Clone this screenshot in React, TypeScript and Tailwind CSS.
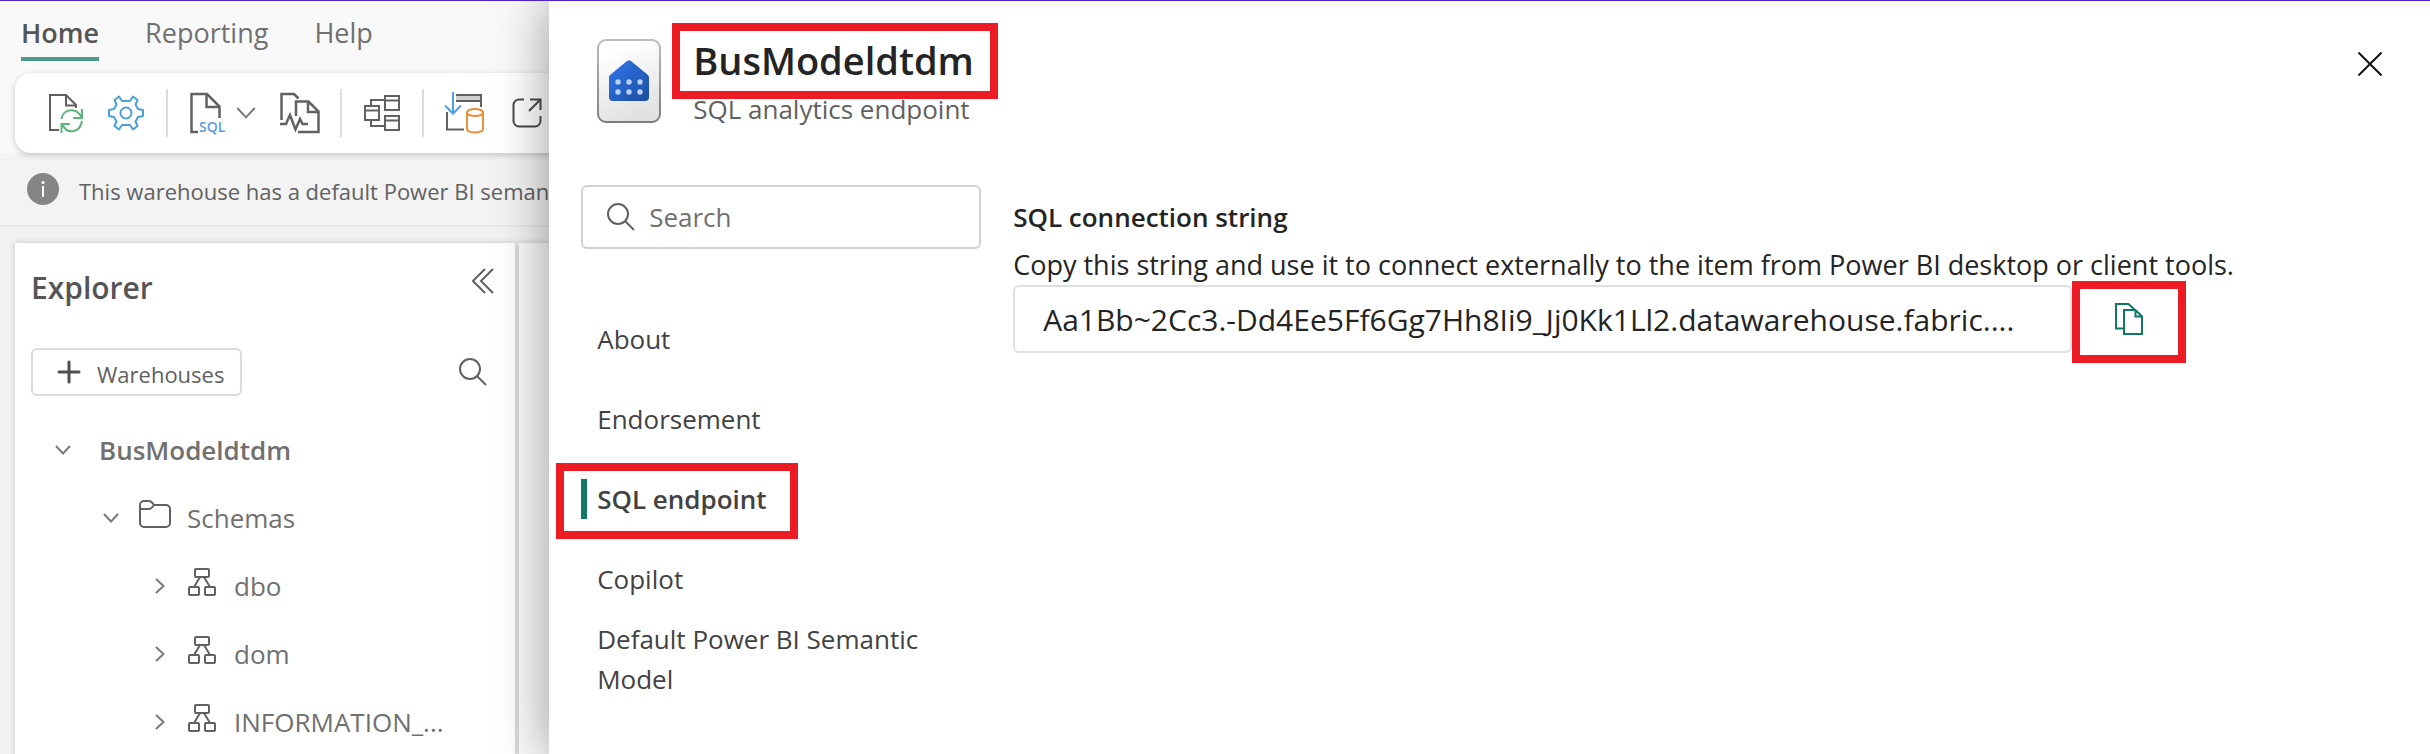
import React from 'react';

const INK = '#616161';

function DocRefresh() {
  return (
    <svg width="36" height="40" viewBox="0 0 36 40" fill="none" strokeWidth="2">
      <path d="M11 37H2V2H18L28 12V15M18 2V12.500H28" stroke="#5f5f5f" />
      <path d="M13.500 26C15 15 29 14 33.500 24.500M34 16V25H25M34 28C32 40 19 42 14.500 31.500M13.500 40V31H22" stroke="#5fb37c" />
    </svg>
  );
}

function Gear() {
  return (
    <svg width="36" height="36" viewBox="-18 -18 36 36" fill="none" stroke="#4ba0dc" strokeWidth="2">
      <path d="M-11.500 -13L-7 -16.500L-4 -12H4L7 -16.500L11.500 -13L9.500 -8.500L12 -4L17 -3V3L12 4L9.500 8.500L11.500 13L7 16.500L4 12H-4L-7 16.500L-11.500 13L-9.500 8.500L-12 4L-17 3V-3L-12 -4L-9.500 -8.500Z" strokeLinejoin="round" />
      <circle r="5.500" />
    </svg>
  );
}

function SqlDoc() {
  return (
    <svg width="38" height="44" viewBox="0 0 38 44" fill="none">
      <path d="M8 41H1.500V3H17L29.500 15.500V27M16.500 3V16H29.500" stroke="#616161" strokeWidth="2.500" />
      <text x="9" y="41" fontSize="14" fontWeight="600" fontFamily="Open Sans, sans-serif" fill="#5b9be6">SQL</text>
    </svg>
  );
}

function DocPulse() {
  return (
    <svg width="40" height="42" viewBox="0 0 40 42" fill="none" stroke="#616161" strokeWidth="2.500">
      <path d="M1.500 28V2H14L18.500 6.500M16 24V9.500H28.500L38.500 19.500V40H18M28 9.500V20H38.500" />
      <path d="M0 32H6L10 23L15.500 37.500L20 27L22.500 32H28" />
    </svg>
  );
}

function Model() {
  return (
    <svg width="36" height="36" viewBox="0 0 36 36" fill="none" stroke="#616161" strokeWidth="2">
      <path d="M1 11H15V25H1ZM1 15.500H15M21 1H35V15H21ZM21 5.500H35M21 21H35V35H21ZM21 25.500H35M7 11V5H21M7 25V31H21" />
    </svg>
  );
}

function TableDownload() {
  return (
    <svg width="40" height="42" viewBox="0 0 40 42" fill="none" strokeWidth="2">
      <path d="M12 3H37V9H12" fill="#d1d1d1" stroke="#616161" />
      <path d="M37 3V15M3 20V37.500H20" stroke="#616161" />
      <path d="M9 0V21M1 13.500L9 21.500L17 13.500" stroke="#4f9ee3" />
      <path d="M23 20.500V37C23 41.500 39 41.500 39 37V20.500" stroke="#e8903c" />
      <ellipse cx="31" cy="20.500" rx="8" ry="3.500" stroke="#e8903c" />
    </svg>
  );
}

function OpenOut() {
  return (
    <svg width="30" height="30" viewBox="0 0 30 30" fill="none" stroke="#4a4a4a" strokeWidth="2">
      <path d="M12 1.500H7A5.500 5.500 0 0 0 1.500 7V23A5.500 5.500 0 0 0 7 28.500H23A5.500 5.500 0 0 0 28.500 23V18M18 1.500H28.500V12M28.500 1.500L17 13" />
    </svg>
  );
}

function Chevron({ dir, size = 16 }: { dir: 'down' | 'right'; size?: number }) {
  return (
    <svg width={size} height={size} viewBox="0 0 16 16" fill="none" stroke="#7a7a7a" strokeWidth={size > 16 ? 1.6 : 2}>
      <path d={dir === 'down' ? 'M1 4L8 11.500L15 4' : 'M4 1L11.500 8L4 15'} />
    </svg>
  );
}

function Magnifier() {
  return (
    <svg width="28" height="28" viewBox="0 0 28 28" fill="none" stroke={INK} strokeWidth="2" className="shrink-0">
      <circle cx="11" cy="11" r="10" />
      <path d="M18 18L27 27" />
    </svg>
  );
}

function Folder() {
  return (
    <svg width="32" height="28" viewBox="0 0 32 28" fill="none" stroke={INK} strokeWidth="2">
      <path d="M1 5A4 4 0 0 1 5 1H10C12 1 13 2 15 5H27A4 4 0 0 1 31 9V23A4 4 0 0 1 27 27H5A4 4 0 0 1 1 23ZM1 9H10C12 9 13 8 15 5" />
    </svg>
  );
}

function SchemaIcon() {
  return (
    <svg width="28" height="28" viewBox="0 0 28 28" fill="none" stroke={INK} strokeWidth="2">
      <rect x="7" y="1" width="14" height="8" rx="1" />
      <rect x="1" y="19" width="10" height="8" rx="1" />
      <rect x="17" y="19" width="10" height="8" rx="1" />
      <path d="M12 9L6 19M16 9L22 19" />
    </svg>
  );
}

function ItemBadge() {
  return (
    <svg width="64" height="84" viewBox="0 0 64 84">
      <defs>
        <linearGradient id="card" x1="0" y1="0" x2="0.300" y2="1">
          <stop offset="0.200" stopColor="#ffffff" />
          <stop offset="1" stopColor="#e2e2e2" />
        </linearGradient>
        <linearGradient id="edge" x1="0" y1="0" x2="0" y2="1">
          <stop offset="0" stopColor="#bdbdbd" />
          <stop offset="1" stopColor="#7d7d7d" />
        </linearGradient>
        <linearGradient id="house" x1="0" y1="0" x2="1" y2="1">
          <stop offset="0.200" stopColor="#2d6fe0" />
          <stop offset="1" stopColor="#1b4d9c" />
        </linearGradient>
      </defs>
      <rect x="1" y="1" width="62" height="82" rx="8" fill="url(#card)" stroke="url(#edge)" strokeWidth="2" />
      <path d="M12 39Q12 37 13 36L30 22Q32 20.500 34 22L51 36Q52 37 52 39V58Q52 62 48 62H16Q12 62 12 58Z" fill="url(#house)" />
      <g fill="#b9d2ff">
        {[21, 32, 43].map((x) => [43, 53].map((y) => <circle key={`${x}-${y}`} cx={x} cy={y} r="2.700" />))}
      </g>
    </svg>
  );
}

function Divider() {
  return <span className="h-12 w-0.5 shrink-0 bg-[#dcdcdc]" />;
}

const schemas = ['dbo', 'dom', 'INFORMATION_...'];
const sections = ['About', 'Endorsement', 'SQL endpoint', 'Copilot'];

function Workspace() {
  return (
    <div className="flex min-w-0 flex-1 flex-col overflow-hidden bg-[#f2f2f2] text-[#616161]">
      <div className="relative bg-[#f9f9f9]">
        <nav className="flex gap-[46px] pt-3 pl-[21px] text-[27px] leading-10 text-[#707070]">
          <a href="#home" className="flex h-12 flex-col border-b-4 border-[#4a9b8a] font-semibold text-[#555]">Home</a>
          <a href="#reporting">Reporting</a>
          <a href="#help">Help</a>
        </nav>
        <div className="pt-3 pl-[15px]">
          <div className="flex h-20 w-[620px] items-center rounded-l-2xl bg-white pl-[33px] shadow-[0_2px_6px_rgba(0,0,0,0.2)]">
            <button aria-label="Refresh"><DocRefresh /></button>
            <button aria-label="Settings" className="mr-[22px] ml-6"><Gear /></button>
            <Divider />
            <button aria-label="New SQL query" className="ml-[22px] flex items-center gap-2"><SqlDoc /><Chevron dir="down" size={20} /></button>
            <button aria-label="Query activity" className="mr-5 ml-6"><DocPulse /></button>
            <Divider />
            <button aria-label="Model layouts" className="mx-[22px]"><Model /></button>
            <Divider />
            <button aria-label="Get data" className="mr-7 ml-5"><TableDownload /></button>
            <button aria-label="Open in new window"><OpenOut /></button>
          </div>
        </div>
      </div>
      <div className="flex h-[74px] shrink-0 items-center gap-5 border-b-2 border-[#e8e8e8] bg-[#f3f3f3] pl-[27px]">
        <svg width="32" height="32" viewBox="0 0 32 32" className="shrink-0">
          <circle cx="16" cy="16" r="16" fill="#858585" />
          <path d="M16 13V24" stroke="#fff" strokeWidth="2" />
          <circle cx="16" cy="9.500" r="1.500" fill="#fff" />
        </svg>
        <p className="pt-1 text-[22px] whitespace-nowrap">This warehouse has a default Power BI semantic model</p>
      </div>
      <div className="mt-4 flex min-h-0 flex-1 gap-1 pl-[15px]">
        <section className="w-[500px] shrink-0 bg-white px-4 shadow-[0_0_6px_rgba(0,0,0,0.2)]">
          <div className="flex items-start justify-between pt-[25px] pr-[5px]">
            <h2 className="text-[30px] leading-10 font-semibold text-[#555]">Explorer</h2>
            <button aria-label="Collapse explorer">
              <svg width="22" height="26" viewBox="0 0 22 26" fill="none" stroke={INK} strokeWidth="2"><path d="M13 1L1 13L13 25M21 1L9 13L21 25" /></svg>
            </button>
          </div>
          <div className="mt-10 flex items-center justify-between pr-3">
            <button className="flex h-12 items-center gap-4 rounded-md border-2 border-[#dcdcdc] px-4 pl-6 text-[22px]">
              <svg width="24" height="24" viewBox="0 0 24 24" stroke="#4f4f4f" strokeWidth="3" strokeLinecap="round"><path d="M12 2V22M2 12H22" /></svg>
              <span className="pt-1">Warehouses</span>
            </button>
            <button aria-label="Search explorer"><Magnifier /></button>
          </div>
          <ul className="mt-5 text-[26px] text-[#707070]">
            <li className="flex h-[68px] items-center pl-6 font-semibold"><Chevron dir="down" /><span className="ml-7">BusModeldtdm</span></li>
            <li className="flex h-[68px] items-center pl-[72px]"><Chevron dir="down" /><span className="mr-4 ml-5 pb-2"><Folder /></span>Schemas</li>
            {schemas.map((s) => (
              <li key={s} className="flex h-[68px] items-center pl-[121px]"><Chevron dir="right" /><span className="mr-[18px] ml-5 pb-2"><SchemaIcon /></span>{s}</li>
            ))}
          </ul>
        </section>
        <section className="flex-1 bg-[#fafafa] shadow-[0_0_6px_rgba(0,0,0,0.2)]" />
      </div>
    </div>
  );
}

function DetailsPanel() {
  return (
    <aside className="relative flex w-[77.4%] shrink-0 flex-col bg-white pr-12 pl-8 shadow-[0_0_50px_rgba(0,0,0,0.4)]">
      <header className="flex h-[184px] items-start">
        <div className="mt-[38px] ml-4"><ItemBadge /></div>
        <div className="relative ml-8 pt-[30px] whitespace-nowrap">
          <h1 className="text-[38px] leading-[58px] font-semibold text-[#242424]">BusModeldtdm</h1>
          <p className="text-[26px] leading-10 text-[#616161]">SQL analytics endpoint</p>
          <span className="absolute -right-6 -left-[21px] top-[22px] h-[76px] border-8 border-[#ed1c24]" />
        </div>
        <button aria-label="Close" className="mt-[51px] ml-auto">
          <svg width="24" height="24" viewBox="0 0 24 24" stroke="#111" strokeWidth="2"><path d="M0.500 0.500L23.500 23.500M23.500 0.500L0.500 23.500" /></svg>
        </button>
      </header>
      <div className="flex">
        <div className="w-[400px] shrink-0">
          <label className="flex h-16 items-center gap-[14px] rounded-md border-2 border-[#d1d1d1] pl-6">
            <Magnifier />
            <input type="search" aria-label="Search settings" placeholder="Search" className="w-full min-w-0 bg-transparent text-[26px] outline-none placeholder:text-[#707070]" />
          </label>
          <nav className="mt-[50px] text-[26px] leading-10 text-[#424242]">
            {sections.map((s) =>
              s === 'SQL endpoint' ? (
                <a key={s} href="#sql-endpoint" className="relative flex h-20 items-center font-semibold">
                  <span className="mr-[10px] h-10 w-1.5 bg-[#117865]" />
                  {s}
                  <span className="absolute top-[4px] -left-[25px] h-[76px] w-[242px] border-8 border-[#ed1c24]" />
                </a>
              ) : (
                <a key={s} href="#section" className="flex h-20 items-center pl-4">{s}</a>
              ),
            )}
            <a href="#semantic-model" className="block pr-10 pl-4">Default Power BI Semantic Model</a>
          </nav>
        </div>
        <section className="ml-8 min-w-0 flex-1 pt-3 text-[#242424]">
          <h2 className="text-[26px] leading-10 font-semibold">SQL connection string</h2>
          <label htmlFor="conn" className="mt-2 block text-[27px] leading-10 whitespace-nowrap">
            Copy this string and use it to connect externally to the item from Power BI desktop or client tools.
          </label>
          <div className="flex items-center">
            <input id="conn" readOnly value="Aa1Bb~2Cc3.-Dd4Ee5Ff6Gg7Hh8Ii9_Jj0Kk1Ll2.datawarehouse.fabric...." className="h-[68px] w-[1059px] rounded-md border-2 border-[#e0e0e0] px-7 text-[30px] outline-none" />
            <button aria-label="Copy connection string" className="relative flex h-[68px] w-[114px] items-center justify-center">
              <svg width="28" height="32" viewBox="0 0 28 32" fill="none" stroke="#117865" strokeWidth="2"><path d="M8 25.500H1V1H13.500L20 7M9 7H20.500L27 13.500V31H9ZM20.500 7V13.500H27" /></svg>
              <span className="absolute inset-x-0 -top-1 h-[82px] border-8 border-[#ed1c24]" />
            </button>
          </div>
        </section>
      </div>
    </aside>
  );
}

export default function App() {
  return (
    <div className="flex min-h-screen overflow-hidden border-t border-[#4f20c8] bg-white font-['Open_Sans',sans-serif]">
      <Workspace />
      <DetailsPanel />
    </div>
  );
}
